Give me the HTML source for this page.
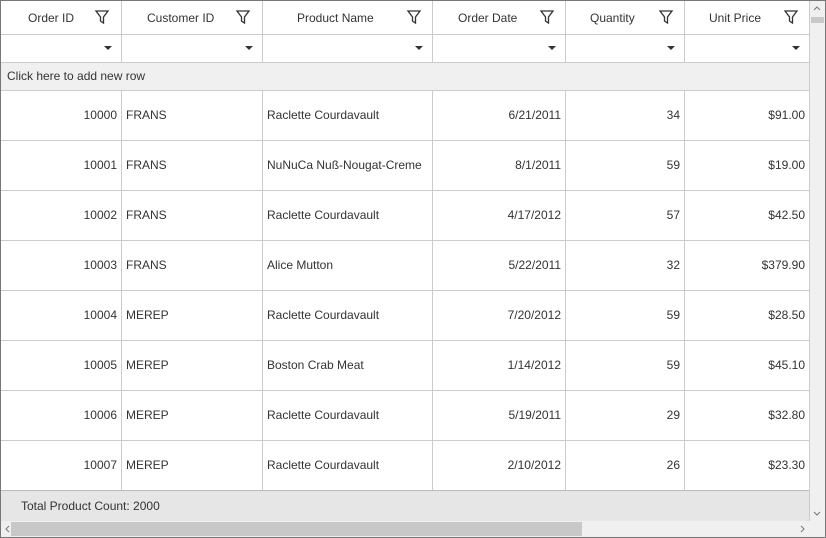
<!DOCTYPE html>
<html><head><meta charset="utf-8"><style>
*{margin:0;padding:0;box-sizing:border-box}
body{width:826px;height:538px;overflow:hidden;background:#fff;font-family:"Liberation Sans",sans-serif;font-size:12px;color:#333;position:relative}
.frame{position:absolute;left:0;top:0;width:826px;height:538px;border:1px solid #777}
.a{position:absolute}
.vl{position:absolute;width:1px;background:#ccc}
.hl{position:absolute;height:1px;background:#ccc}
.t{position:absolute;white-space:nowrap;line-height:14px}
</style></head><body>
<div class="frame"></div>
<div class="a" style="left:1px;top:62px;width:808px;height:28px;background:#f0f0f0"></div>
<div class="a" style="left:1px;top:490px;width:808px;height:31px;background:#e6e6e6"></div>
<div class="hl" style="left:1px;top:490px;width:808px;background:#bbb"></div>
<!-- grid lines -->
<div class="hl" style="left:1px;top:34px;width:808px"></div>
<div class="hl" style="left:1px;top:62px;width:808px"></div>
<div class="hl" style="left:1px;top:90px;width:808px"></div>
<div class="hl" style="left:1px;top:140px;width:808px"></div>
<div class="hl" style="left:1px;top:190px;width:808px"></div>
<div class="hl" style="left:1px;top:240px;width:808px"></div>
<div class="hl" style="left:1px;top:290px;width:808px"></div>
<div class="hl" style="left:1px;top:340px;width:808px"></div>
<div class="hl" style="left:1px;top:390px;width:808px"></div>
<div class="hl" style="left:1px;top:440px;width:808px"></div>
<div class="vl" style="left:121px;top:1px;height:61px"></div>
<div class="vl" style="left:262px;top:1px;height:61px"></div>
<div class="vl" style="left:432px;top:1px;height:61px"></div>
<div class="vl" style="left:565px;top:1px;height:61px"></div>
<div class="vl" style="left:684px;top:1px;height:61px"></div>
<div class="vl" style="left:809px;top:1px;height:61px"></div>
<div class="vl" style="left:121px;top:90px;height:400px"></div>
<div class="vl" style="left:262px;top:90px;height:400px"></div>
<div class="vl" style="left:432px;top:90px;height:400px"></div>
<div class="vl" style="left:565px;top:90px;height:400px"></div>
<div class="vl" style="left:684px;top:90px;height:400px"></div>
<div class="vl" style="left:809px;top:90px;height:400px"></div>
<div class="vl" style="left:809px;top:1px;height:520px"></div>
<svg class="a" style="left:0;top:0" width="826" height="538">
<g fill="none" stroke="#333" stroke-width="1.3">
<path d="M96 11h12l-4.5 6v6l-3-2v-4z"/>
<path d="M237 11h12l-4.5 6v6l-3-2v-4z"/>
<path d="M408 11h12l-4.5 6v6l-3-2v-4z"/>
<path d="M541 11h12l-4.5 6v6l-3-2v-4z"/>
<path d="M660 11h12l-4.5 6v6l-3-2v-4z"/>
<path d="M785 11h12l-4.5 6v6l-3-2v-4z"/>
</g>
<g fill="#333">
<path d="M104 46h8l-4 4z"/><path d="M245 46h8l-4 4z"/><path d="M415 46h8l-4 4z"/>
<path d="M548 46h8l-4 4z"/><path d="M667 46h8l-4 4z"/><path d="M792 46h8l-4 4z"/>
</g>
<rect x="810" y="1" width="15" height="520" fill="#f0f0f0"/>
<rect x="811" y="17" width="13" height="6" fill="#c8c8c8"/>
<rect x="1" y="521" width="824" height="16" fill="#f0f0f0"/>
<rect x="11" y="522" width="571" height="14" fill="#c8c8c8"/>
<g fill="none" stroke="#777" stroke-width="1">
<path d="M814 10l3-3 3 3"/><path d="M814 512l3 3 3-3"/>
<path d="M9 526l-3 3 3 3"/><path d="M801 526l3 3-3 3"/>
</g>
</svg>
<div class="t" style="left:28px;top:11px">Order ID</div>
<div class="t" style="left:147px;top:11px">Customer ID</div>
<div class="t" style="left:297px;top:11px">Product Name</div>
<div class="t" style="left:458px;top:11px">Order Date</div>
<div class="t" style="left:590px;top:11px">Quantity</div>
<div class="t" style="left:709px;top:11px">Unit Price</div>
<div class="t" style="left:7px;top:69px">Click here to add new row</div>
<div class="t" style="left:21px;top:499px">Total Product Count: 2000</div>
<div id="rows"></div>
<script>
var d=[["10000","FRANS","Raclette Courdavault","6/21/2011","34","$91.00"],
["10001","FRANS","NuNuCa Nuß-Nougat-Creme","8/1/2011","59","$19.00"],
["10002","FRANS","Raclette Courdavault","4/17/2012","57","$42.50"],
["10003","FRANS","Alice Mutton","5/22/2011","32","$379.90"],
["10004","MEREP","Raclette Courdavault","7/20/2012","59","$28.50"],
["10005","MEREP","Boston Crab Meat","1/14/2012","59","$45.10"],
["10006","MEREP","Raclette Courdavault","5/19/2011","29","$32.80"],
["10007","MEREP","Raclette Courdavault","2/10/2012","26","$23.30"]];
var h="";d.forEach(function(r,i){var y=108+i*50;
h+='<div class="t" style="right:709px;top:'+y+'px">'+r[0]+'</div>';
h+='<div class="t" style="left:126px;top:'+y+'px">'+r[1]+'</div>';
h+='<div class="t" style="left:267px;top:'+y+'px">'+r[2]+'</div>';
h+='<div class="t" style="right:265px;top:'+y+'px">'+r[3]+'</div>';
h+='<div class="t" style="right:146px;top:'+y+'px">'+r[4]+'</div>';
h+='<div class="t" style="right:21px;top:'+y+'px">'+r[5]+'</div>';});
document.getElementById("rows").innerHTML=h;
</script>
</body></html>
